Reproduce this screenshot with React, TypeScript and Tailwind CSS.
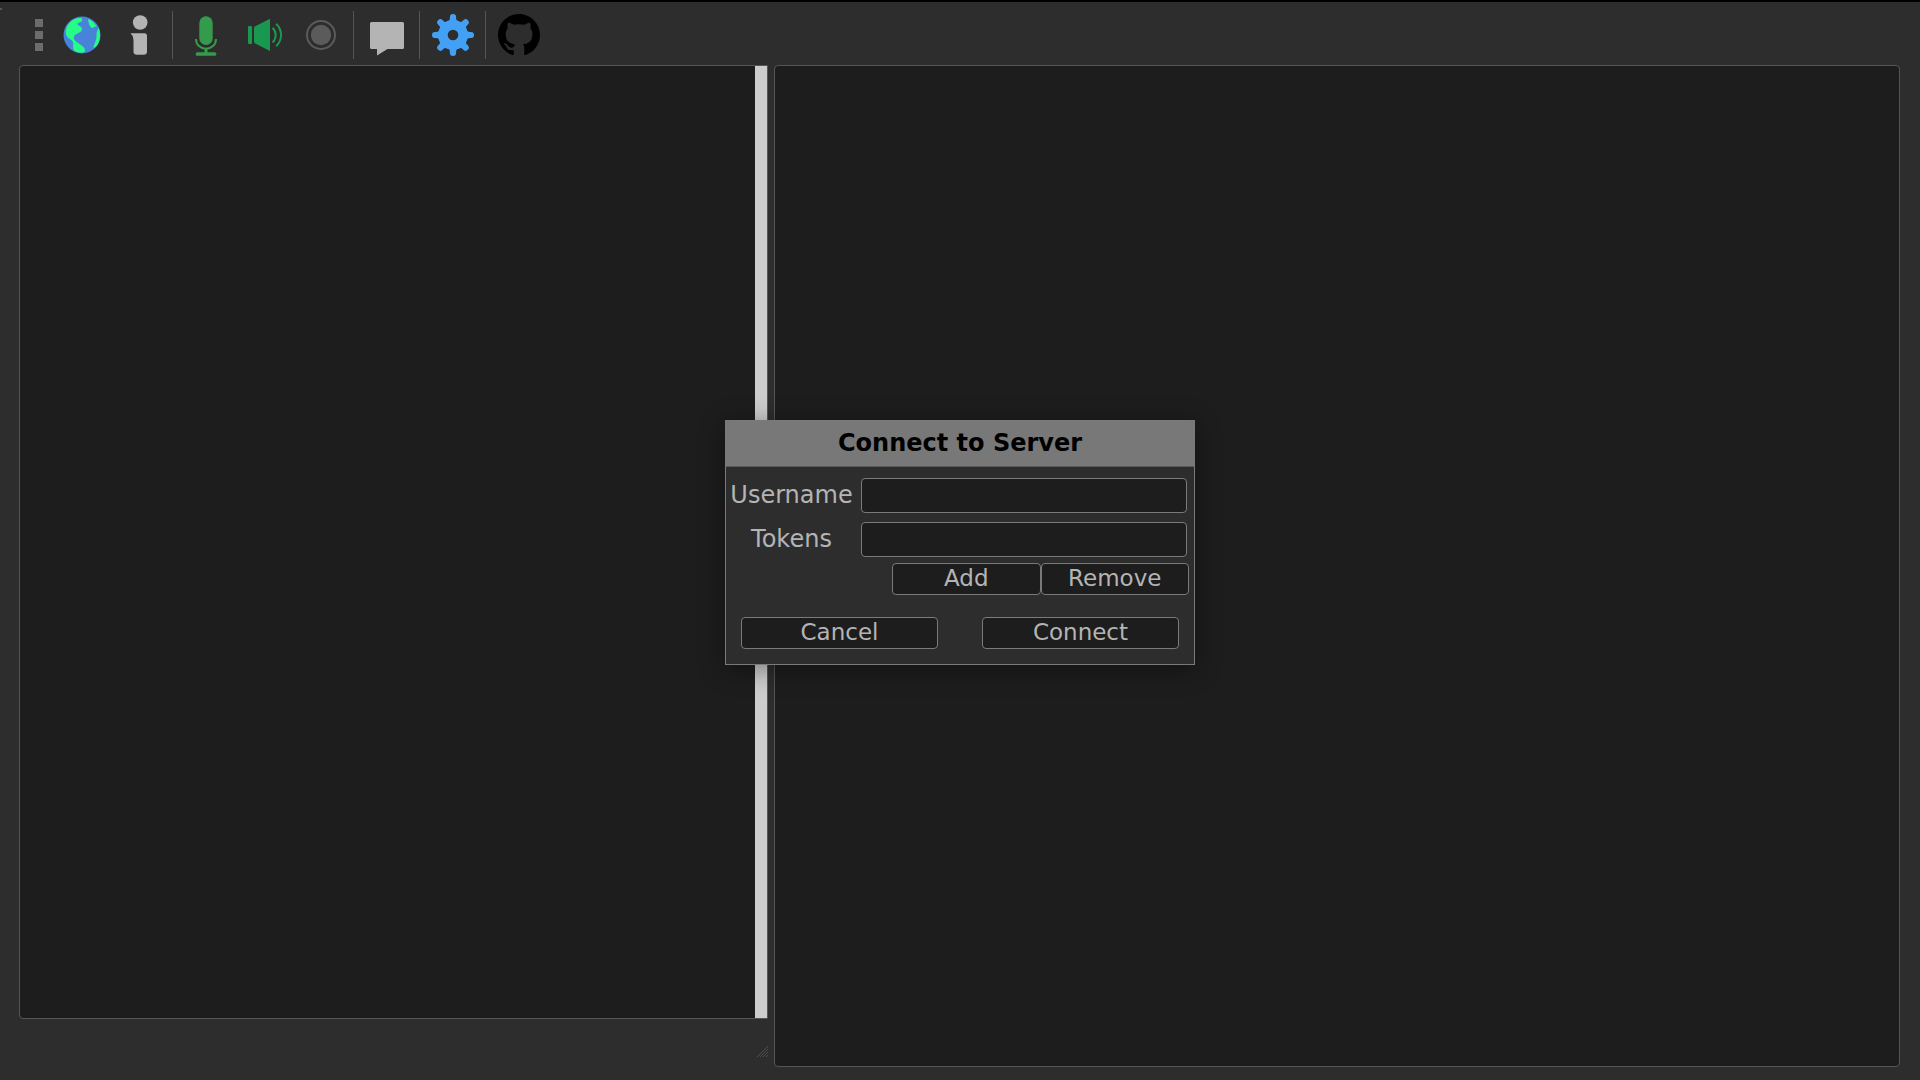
import { useState } from "react";

function GlobeIcon() {
  return (
    <svg viewBox="0 0 42 42" className="w-full h-full">
      <circle cx="21" cy="21" r="18.500" fill="#4784d9" />
      <path
        d="M20 4C15 4 11 5.500 8.500 9C4.500 13.500 4 19 6 22.500C7.500 25 11 25.500 12 28C12.500 31 11.500 34 13 36.500C16 38.800 21 39.300 23.500 37.800C25 36 23.500 33.500 20.500 31.500C17.500 29 13.500 27 12.800 24.500C12.300 22 14 20.500 16.500 19.500C19 18.500 21.500 16.500 21 14.500C20.500 12.300 16.500 11.500 16.500 10C16.800 8.300 20.500 8.500 21 6.500C21.300 5 21 4.200 20 4Z"
        fill="#26fd87"
      />
      <path d="M27.500 5C31 6.500 34 9.500 35.500 12.500C34 12.500 32.500 12.500 32 14C31 14.500 28.800 12.500 28.200 10.500C28 8.500 26.500 7 27.500 5Z" fill="#26fd87" />
      <path d="M37.500 13.500C40 19 39.500 26 36.500 31C35 33 33.500 34 32.500 33.500C32.500 31 34 29.500 35 26C36 22 35 20 36 17.500C36.500 16 37.500 15 37.500 13.500Z" fill="#26fd87" />
    </svg>
  );
}

function InfoIcon() {
  return (
    <svg viewBox="0 0 42 42" className="w-full h-full" fill="#b4b4b4">
      <circle cx="21.200" cy="8.500" r="7.300" />
      <path d="M12.200 19.200H25.500Q28 19.200 28 21.700V37.500Q28 40.700 24.500 40.700H18Q14.500 40.700 14.500 37.500V27C14.500 23 13.500 21 12 20.200Q11.200 19.300 12.200 19.200Z" />
    </svg>
  );
}

function MicIcon() {
  return (
    <svg viewBox="0 0 42 42" className="w-full h-full" fill="#359b4c">
      <rect x="14.300" y="2.200" width="13.400" height="28.800" rx="6.700" />
      <path d="M11 25C11 31 15.500 34.700 21 34.700S31 31 31 25" fill="none" stroke="#359b4c" strokeWidth="2" />
      <rect x="19.500" y="34" width="3" height="6" />
      <rect x="10.700" y="38.200" width="20.600" height="3.600" rx="1.600" />
    </svg>
  );
}

function SpeakerIcon() {
  return (
    <svg viewBox="0 0 42 42" className="w-full h-full" fill="#19994f">
      <rect x="5" y="12" width="4" height="18" rx="1" />
      <path d="M11 14.200Q11 12.800 12.200 12.200L27 4.800V37L12.200 29.400Q11 28.800 11 27.500Z" />
      <path d="M29.600 13.700C33.700 17.500 33.700 24.500 29.600 28.500M33.200 9.800C39.700 16.500 39.700 25.500 33.200 32.300" fill="none" stroke="#19994f" strokeWidth="2" />
    </svg>
  );
}

function RecordIcon() {
  return (
    <svg viewBox="0 0 41 42" className="w-full h-full">
      <circle cx="20" cy="21" r="14" fill="none" stroke="#5b5b5b" strokeWidth="2" />
      <circle cx="20" cy="21" r="10.200" fill="#5b5b5b" />
    </svg>
  );
}

function ChatIcon() {
  return (
    <svg viewBox="0 0 42 42" className="w-full h-full" fill="#b4b4b4">
      <path d="M5.500 8H36.500Q38 8 38 9.500V33.500Q38 35 36.500 35H21.500L11 41.500V35H5.500Q4 35 4 33.500V9.500Q4 8 5.500 8Z" />
    </svg>
  );
}

const TEETH = [0, 45, 90, 135, 180, 225, 270, 315];

function GearIcon() {
  return (
    <svg viewBox="0 0 42 42" className="w-full h-full" fill="#43a1f5">
      <circle cx="21" cy="21" r="10.100" fill="none" stroke="#43a1f5" strokeWidth="9.600" />
      {TEETH.map((angle) => (
        <path
          key={angle}
          d="M15.200 7.700C17.300 7 17.900 6 17.900 4V3Q17.900 0 21 0T24.100 3V4C24.100 6 24.700 7 26.800 7.700L26 11H16Z"
          transform={`rotate(${angle} 21 21)`}
        />
      ))}
    </svg>
  );
}

function GithubIcon() {
  return (
    <svg viewBox="0 0 16 16" className="w-full h-full" fill="#000000">
      <path d="M8 0C3.580 0 0 3.580 0 8c0 3.540 2.290 6.530 5.470 7.590.4.070.55-.17.55-.38 0-.19-.01-.82-.01-1.490-2.010.37-2.530-.49-2.690-.94-.09-.23-.48-.94-.82-1.130-.28-.15-.68-.52-.01-.53.63-.01 1.080.58 1.230.82.72 1.210 1.870.87 2.330.66.070-.52.28-.87.51-1.070-1.780-.2-3.640-.89-3.640-3.950 0-.87.31-1.590.82-2.150-.08-.2-.36-1.020.08-2.120 0 0 .67-.21 2.200.82.64-.18 1.320-.27 2-.27s1.360.09 2 .27c1.530-1.040 2.200-.82 2.200-.82.44 1.100.16 1.920.08 2.120.51.56.82 1.270.82 2.150 0 3.070-1.870 3.750-3.650 3.950.29.25.54.73.54 1.480 0 1.070-.01 1.930-.01 2.200 0 .21.15.46.55.38A8.010 8.010 0 0 0 16 8c0-4.420-3.580-8-8-8Z" />
    </svg>
  );
}

function ToolButton({ label, children }: { label: string; children: React.ReactNode }) {
  return (
    <button type="button" aria-label={label} className="w-[42px] h-[42px] shrink-0">
      {children}
    </button>
  );
}

function Separator() {
  return <div className="w-px h-12 ml-[11px] mr-3 bg-[#555555] shrink-0" />;
}

function Toolbar() {
  return (
    <header className="h-[63px] pt-[3px] pl-[35px] flex items-center relative shrink-0">
      <div className="absolute left-0 top-[6px] w-[2px] h-[2px] bg-[#555555]" />

      {/* Drag handle */}
      <div className="flex flex-col gap-1 mr-[18px]">
        <div className="w-2 h-2 bg-[#6c6c6c]" />
        <div className="w-2 h-2 bg-[#6c6c6c]" />
        <div className="w-2 h-2 bg-[#6c6c6c]" />
      </div>

      <div className="flex gap-4">
        <ToolButton label="Connect"><GlobeIcon /></ToolButton>
        <ToolButton label="Information"><InfoIcon /></ToolButton>
      </div>
      <Separator />
      <div className="flex gap-4">
        <ToolButton label="Microphone"><MicIcon /></ToolButton>
        <ToolButton label="Speaker"><SpeakerIcon /></ToolButton>
        <button type="button" aria-label="Record" className="w-[41px] h-[42px] shrink-0">
          <RecordIcon />
        </button>
      </div>
      <Separator />
      <ToolButton label="Chat"><ChatIcon /></ToolButton>
      <Separator />
      <ToolButton label="Settings"><GearIcon /></ToolButton>
      <Separator />
      <ToolButton label="GitHub"><GithubIcon /></ToolButton>
    </header>
  );
}

const inputClass = "w-full h-[35px] px-2 rounded bg-[#1d1d1d] border border-[#7a7a7a] outline-none";
const buttonClass = "h-8 pb-[3px] flex items-center justify-center rounded bg-[#1d1d1d] border border-[#7a7a7a] text-[23px] leading-7";

function ConnectDialog() {
  const [username, setUsername] = useState("");
  const [tokens, setTokens] = useState("");

  return (
    <form
      role="dialog"
      aria-labelledby="connect-title"
      onSubmit={(e) => e.preventDefault()}
      className="w-[470px] bg-[#2d2d2d] border border-[#7a7a7a] shadow-[0_4px_24px_rgba(0,0,0,0.4)]"
    >
      <h1 id="connect-title" className="h-[46px] pb-px flex items-center justify-center bg-[#787878] border-b border-[#5a5a5a] text-black text-2xl font-bold">
        Connect to Server
      </h1>

      <div className="pt-[11px] pr-[7px] grid grid-cols-[135px_1fr] gap-y-[9px] items-center text-2xl">
        <label htmlFor="username" className="text-center pb-[2px] pr-1">Username</label>
        <input id="username" value={username} onChange={(e) => setUsername(e.target.value)} className={inputClass} />
        <label htmlFor="tokens" className="text-center pb-[2px] pr-1">Tokens</label>
        <input id="tokens" value={tokens} onChange={(e) => setTokens(e.target.value)} className={inputClass} />
      </div>

      <div className="mt-[6px] ml-[166px] mr-[5px] grid grid-cols-2">
        <button type="button" className={buttonClass}>Add</button>
        <button type="button" className={buttonClass}>Remove</button>
      </div>

      <div className="mt-[22px] mx-[15px] mb-[15px] grid grid-cols-2 gap-11">
        <button type="button" className={buttonClass}>Cancel</button>
        <button type="submit" className={buttonClass}>Connect</button>
      </div>
    </form>
  );
}

export default function App() {
  return (
    <div className="relative h-screen flex flex-col overflow-hidden bg-[#2d2d2d] border-t-2 border-black text-[#b4b4b4] font-['DejaVu_Sans',sans-serif]">
      <Toolbar />

      <main className="flex-1 min-h-0 flex gap-[6px] pl-[19px] pr-5 pb-[13px]">
        <div className="flex-[2] min-w-0 flex flex-col">
          <section className="flex-1 flex justify-end rounded-l bg-[#1d1d1d] border border-[#555555]">
            <div className="w-3 bg-[#cdcdcd]" />
          </section>
          <div className="h-12 flex items-end justify-end pb-[10px]">
            <svg viewBox="0 0 11 11" className="w-[11px] h-[11px]" stroke="#555555" strokeWidth="0.8" fill="none">
              <path d="M0 11L11 0M3 11L11 3M6 11L11 6M9 11L11 9" />
            </svg>
          </div>
        </div>
        <section className="flex-[3] min-w-0 rounded bg-[#1d1d1d] border border-[#555555]" />
      </main>

      <div className="absolute inset-0 pt-[3px] flex items-center justify-center">
        <ConnectDialog />
      </div>
    </div>
  );
}
